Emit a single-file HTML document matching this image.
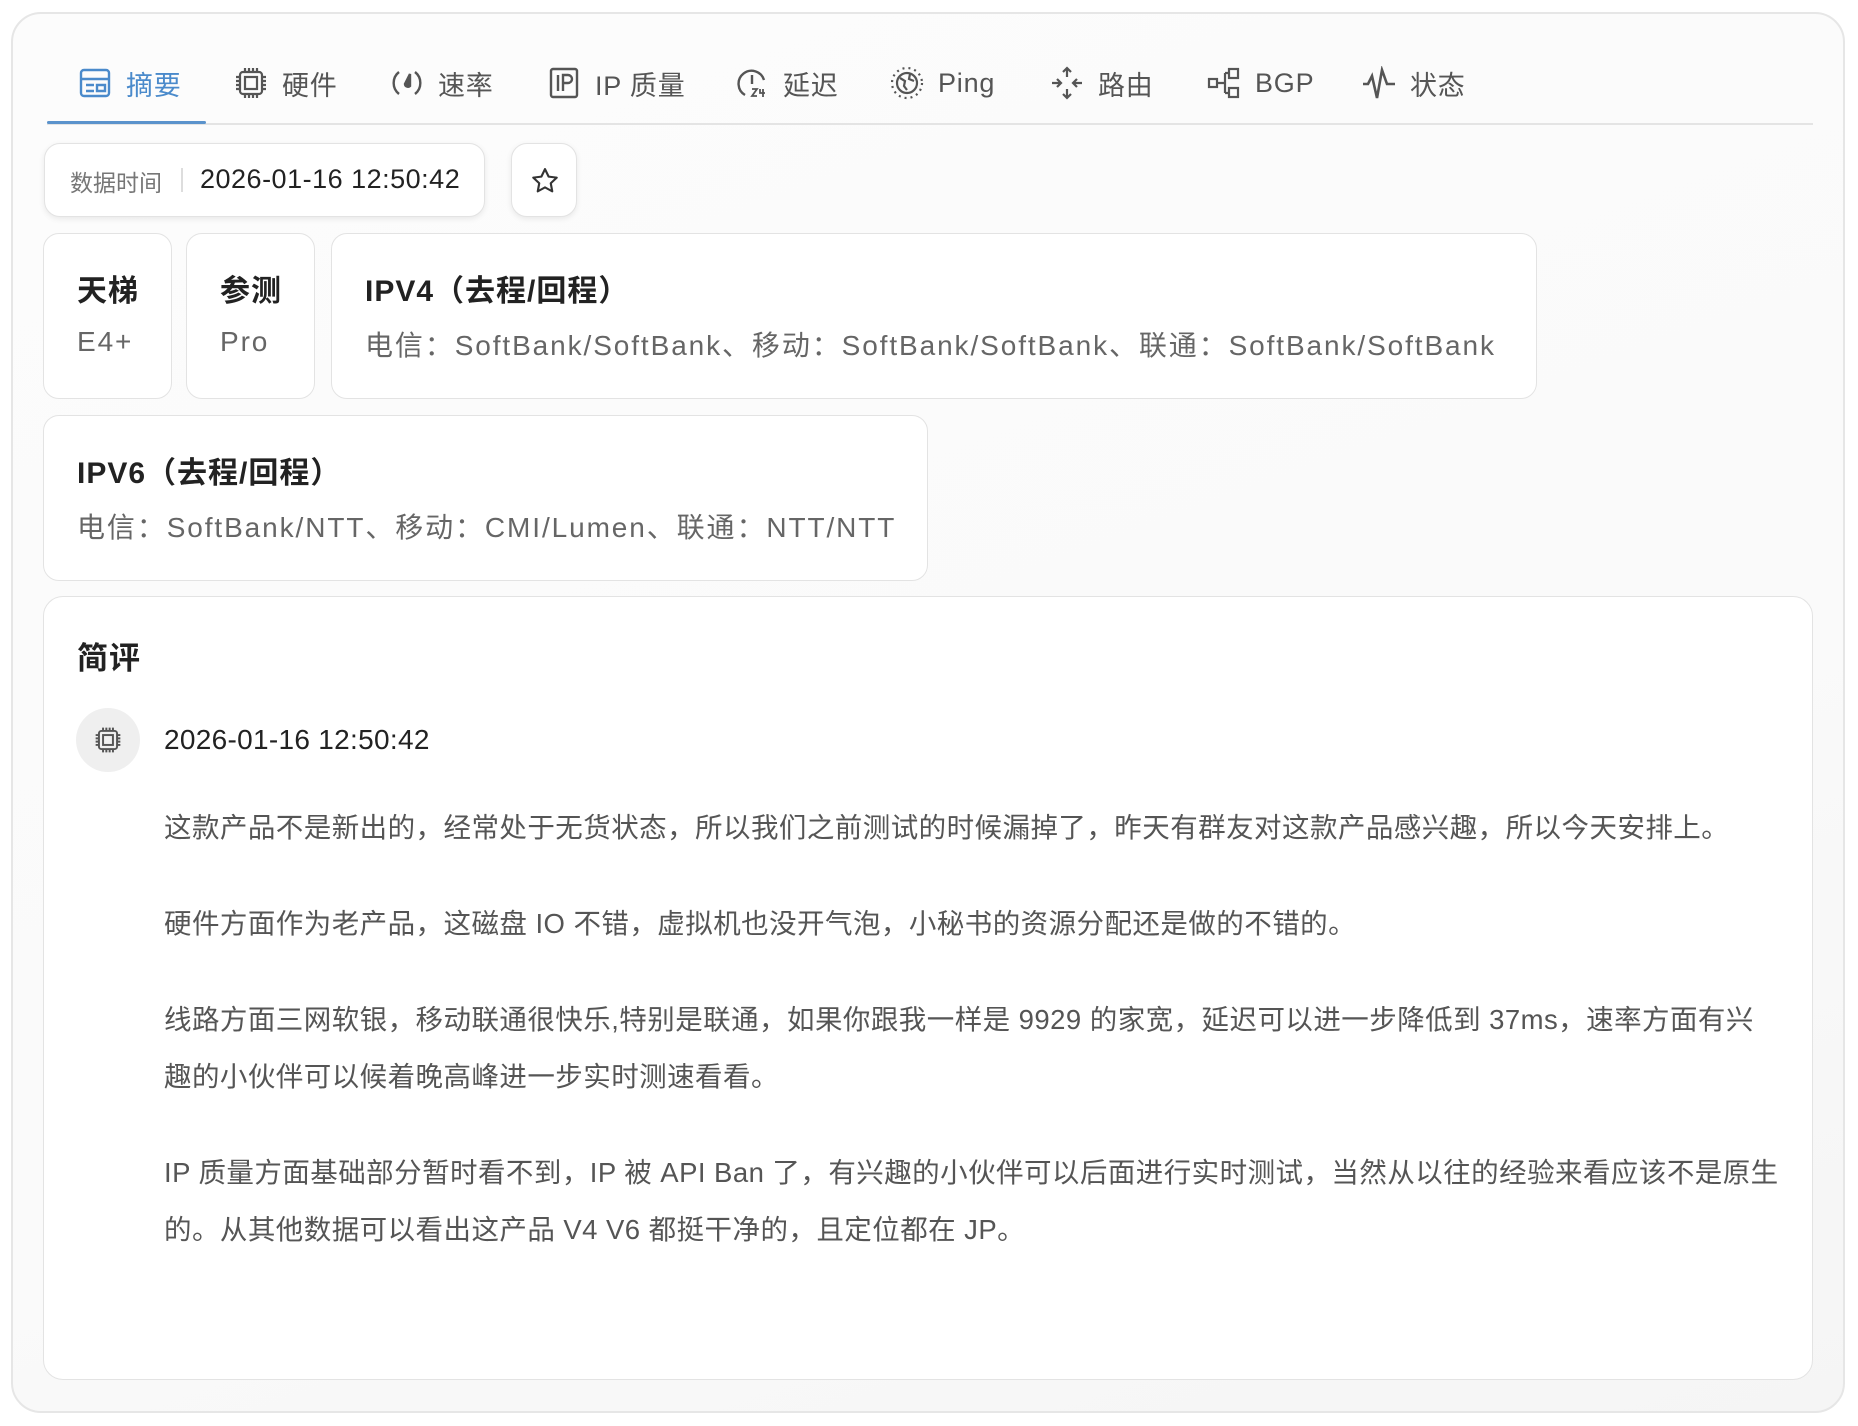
<!DOCTYPE html>
<html><head><meta charset="utf-8"><style>
*{box-sizing:border-box;margin:0;padding:0}
body{width:1858px;height:1426px;background:#fff;font-family:"Liberation Sans","Noto Sans CJK SC",sans-serif;position:relative;overflow:hidden}
.outer{position:absolute;left:11px;top:12px;width:1834px;height:1401px;border:2px solid #e6e6e6;border-radius:30px;background:linear-gradient(160deg,#fcfcfc 0%,#fafafa 60%,#f5f5f5 100%)}
.tab{position:absolute;top:64px;height:38px;display:flex;align-items:center;font-size:27px;color:#555;letter-spacing:0.8px}
.tab svg{width:34px;height:34px;margin-right:14px}
.tab.active{color:#4a8acb}
.line{position:absolute;left:47px;top:123px;width:1766px;height:2px;background:#e4e4e4}
.aline{position:absolute;left:47px;top:121px;width:159px;height:3px;background:#5b93cc;border-radius:2px}
.box{position:absolute;background:#fff;border:1.5px solid #e3e3e3;border-radius:16px}
.sh{box-shadow:0 2px 6px rgba(0,0,0,.08)}
.t{font-size:30px;font-weight:bold;color:#222;position:absolute;left:33px;top:32px;white-space:nowrap;letter-spacing:1px}
.s{font-size:28px;color:#666;position:absolute;left:33px;top:90px;white-space:nowrap;letter-spacing:1.9px}
p{font-size:27.5px;color:#555;line-height:57px;margin-bottom:39px;letter-spacing:0.45px}
</style></head><body>
<div class="outer"></div>

<div class="tab active" style="left:78px"><svg viewBox="0 0 34 34" fill="none" stroke="#4a8acb" stroke-width="2.4"><rect x="3" y="4" width="28" height="26" rx="3"/><path d="M3 13h28M8 19h8M8 25h8M19 19h8v6h-8z"/></svg>摘要</div>
<div class="tab" style="left:234px"><svg viewBox="0 0 34 34" fill="none" stroke="#555" stroke-width="2.2"><rect x="6" y="6" width="22" height="22" rx="3"/><rect x="11" y="11" width="12" height="12"/><path d="M11 2v4M15 2v4M19 2v4M23 2v4M11 28v4M15 28v4M19 28v4M23 28v4M2 11h4M2 15h4M2 19h4M2 23h4M28 11h4M28 15h4M28 19h4M28 23h4"/></svg>硬件</div>
<div class="tab" style="left:390px"><svg viewBox="0 0 34 34" fill="none" stroke="#555" stroke-width="2.4"><path d="M9 6a14 14 0 0 0 0 22M25 6a14 14 0 0 1 0 22"/><path d="M20 8l-5 10a3 3 0 0 0 5 2z" fill="#555"/></svg>速率</div>
<div class="tab" style="left:547px"><svg viewBox="0 0 34 34" fill="none" stroke="#555" stroke-width="2.4"><rect x="4" y="3" width="26" height="28" rx="2"/><path d="M11 9v16M16 25V9h5a4 4 0 0 1 0 8h-5"/></svg>IP 质量</div>
<div class="tab" style="left:735px"><svg viewBox="0 0 34 34" fill="none" stroke="#555" stroke-width="2.4"><path d="M10 29A13 13 0 1 1 29 14"/><path d="M17 9v9"/><path d="M17 23h5l-5 7h5M25 23v4h5M28 23v8" stroke-width="1.8"/></svg>延迟</div>
<div class="tab" style="left:890px"><svg viewBox="0 0 34 34" fill="none" stroke="#555" stroke-width="2.2"><circle cx="17" cy="17" r="10"/><path d="M10 12l5 3-1 5 3 4M20 8l-1 5 5 2" /><circle cx="17" cy="17" r="15" stroke-dasharray="2 4"/></svg>Ping</div>
<div class="tab" style="left:1050px"><svg viewBox="0 0 34 34" fill="none" stroke="#555" stroke-width="2.2"><path d="M17 2v9M13 6l4-4 4 4M17 32v-9M13 28l4 4 4-4M2 17h9M7 13l4 4-4 4M32 17h-9M27 13l-4 4 4 4"/></svg>路由</div>
<div class="tab" style="left:1207px"><svg viewBox="0 0 34 34" fill="none" stroke="#555" stroke-width="2.2"><rect x="2" y="13" width="8" height="8"/><rect x="22" y="3" width="9" height="9"/><rect x="22" y="22" width="9" height="9"/><path d="M10 17h8M18 7v20M18 7h4M18 27h4"/></svg>BGP</div>
<div class="tab" style="left:1362px"><svg viewBox="0 0 34 34" fill="none" stroke="#555" stroke-width="2.6"><path d="M1 18h5l4-8 5 22 5-28 5 14h8"/></svg>状态</div>
<div class="line"></div><div class="aline"></div>

<div class="box sh" style="left:44px;top:143px;width:441px;height:74px;border-radius:16px">
<span style="position:absolute;left:25px;top:20px;font-size:23px;color:#777">数据时间</span>
<span style="position:absolute;left:136px;top:24px;width:2px;height:24px;background:#ddd"></span>
<span style="position:absolute;left:155px;top:20px;font-size:27px;color:#222;letter-spacing:0.5px">2026-01-16 12:50:42</span></div>
<div class="box sh" style="left:511px;top:143px;width:66px;height:74px"><svg style="position:absolute;left:18px;top:22px" width="30" height="30" viewBox="0 0 24 24" fill="none" stroke="#333" stroke-width="1.7" stroke-linejoin="round"><path d="M12 2.5l2.9 6 6.5.8-4.8 4.5 1.2 6.5L12 17.1l-5.8 3.2 1.2-6.5L2.6 9.3l6.5-.8z"/></svg></div>

<div class="box" style="left:43px;top:233px;width:129px;height:166px"><div class="t">天梯</div><div class="s" style="top:92px">E4+</div></div>
<div class="box" style="left:186px;top:233px;width:129px;height:166px"><div class="t">参测</div><div class="s" style="top:92px">Pro</div></div>
<div class="box" style="left:331px;top:233px;width:1206px;height:166px"><div class="t">IPV4（去程/回程）</div><div class="s">电信：SoftBank/SoftBank、移动：SoftBank/SoftBank、联通：SoftBank/SoftBank</div></div>
<div class="box" style="left:43px;top:415px;width:885px;height:166px"><div class="t">IPV6（去程/回程）</div><div class="s">电信：SoftBank/NTT、移动：CMI/Lumen、联通：NTT/NTT</div></div>

<div class="box" style="left:43px;top:596px;width:1770px;height:784px;border-radius:20px">
<div class="t" style="top:36px;font-size:31px">简评</div>
<div style="position:absolute;left:32px;top:111px;width:64px;height:64px;border-radius:50%;background:#efefef"><svg style="position:absolute;left:18px;top:18px" width="28" height="28" viewBox="0 0 34 34" fill="none" stroke="#555" stroke-width="2.4"><rect x="6" y="6" width="22" height="22" rx="3"/><rect x="11" y="11" width="12" height="12"/><path d="M11 2v4M15 2v4M19 2v4M23 2v4M11 28v4M15 28v4M19 28v4M23 28v4M2 11h4M2 15h4M2 19h4M2 23h4M28 11h4M28 15h4M28 19h4M28 23h4"/></svg></div>
<div style="position:absolute;left:120px;top:127px;font-size:28px;color:#222;letter-spacing:0.3px">2026-01-16 12:50:42</div>
<div style="position:absolute;left:120px;top:202px;width:1660px">
<p>这款产品不是新出的，经常处于无货状态，所以我们之前测试的时候漏掉了，昨天有群友对这款产品感兴趣，所以今天安排上。</p>
<p>硬件方面作为老产品，这磁盘 IO 不错，虚拟机也没开气泡，小秘书的资源分配还是做的不错的。</p>
<p>线路方面三网软银，移动联通很快乐,特别是联通，如果你跟我一样是 9929 的家宽，延迟可以进一步降低到 37ms，速率方面有兴<br>趣的小伙伴可以候着晚高峰进一步实时测速看看。</p>
<p>IP 质量方面基础部分暂时看不到，IP 被 API Ban 了，有兴趣的小伙伴可以后面进行实时测试，当然从以往的经验来看应该不是原生<br>的。从其他数据可以看出这产品 V4 V6 都挺干净的，且定位都在 JP。</p>
</div></div>
</body></html>
